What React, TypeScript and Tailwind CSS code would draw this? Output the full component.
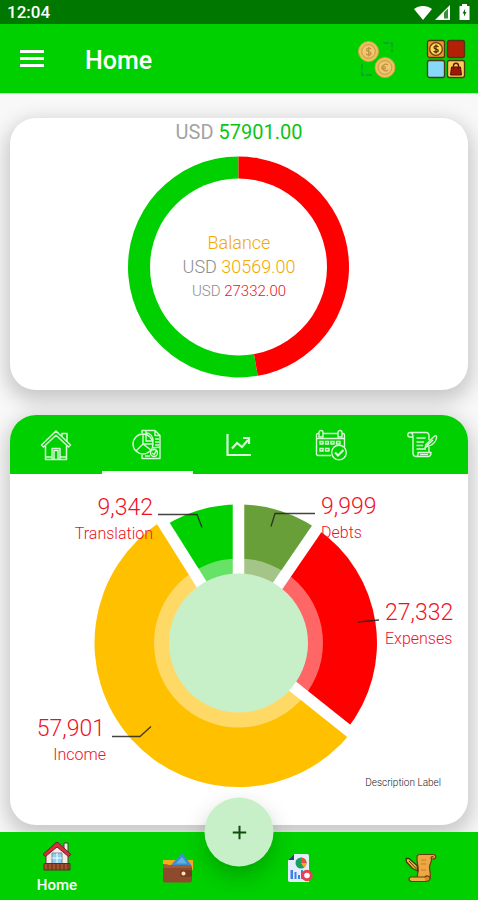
import React from "react";

function point(cx: number, cy: number, r: number, deg: number) {
  const a = ((deg - 90) * Math.PI) / 180;
  return `${(cx + r * Math.cos(a)).toFixed(2)} ${(cy + r * Math.sin(a)).toFixed(2)}`;
}

function wedge(cx: number, cy: number, r: number, from: number, to: number) {
  const large = to - from > 180 ? 1 : 0;
  return `M${cx} ${cy}L${point(cx, cy, r, from)}A${r} ${r} 0 ${large} 1 ${point(cx, cy, r, to)}Z`;
}

function StatusBar() {
  return (
    <div className="flex h-6 items-center justify-between bg-[#007800] pl-[7px] pr-2 text-white">
      <span className="text-[17px] leading-5 font-medium">12:04</span>
      <div className="flex items-center gap-[3px]" aria-hidden="true">
        <svg width="18" height="15" viewBox="0 0 18 15" fill="currentColor">
          <path d="M0 4C5 0 13 0 18 4L9 15Z" />
        </svg>
        <svg width="15" height="15" viewBox="0 0 15 15">
          <path d="M0 15L15 0V15Z" fill="#fff" />
          <path d="M9 7.500L13 3.500V13.500H9Z" fill="#3b8f3b" />
        </svg>
        <svg width="11" height="16" viewBox="0 0 11 16" className="ml-[6px]">
          <path d="M3 0H8V2H10.500V16H.5V2H3Z" fill="#fff" />
          <path d="M6 5L3.500 9.500H5V12.500L7.500 8H6Z" fill="#0b6b0b" />
        </svg>
      </div>
    </div>
  );
}

function CoinsIcon() {
  return (
    <svg width="38" height="38" viewBox="0 0 38 38">
      <path d="M25 3H34V12M4 24V35H15" fill="none" stroke="#0f9a35" strokeWidth="1.300" strokeDasharray="6 1.500" />
      <circle cx="10.500" cy="11.500" r="10" fill="#eec062" stroke="#d3a548" strokeWidth="1" />
      <circle cx="10.500" cy="11.500" r="6.800" fill="#f0c870" stroke="#d2a04a" strokeWidth="1.200" />
      <path d="M13 9.300C12.300 7.600 8.500 7.600 8.500 9.700C8.500 12 13 11 13 13.500C13 15.700 8.800 15.500 8 13.700M10.700 7V16.500" fill="none" stroke="#c39240" strokeWidth="1.300" />
      <circle cx="27" cy="27.500" r="10" fill="#eec062" stroke="#d3a548" strokeWidth="1" />
      <circle cx="27" cy="27.500" r="6.800" fill="#f0c870" stroke="#d2a04a" strokeWidth="1.200" />
      <path d="M30 25C28 23 24.500 24.500 24.500 27.500C24.500 30.500 28 32 30 30M23 26.800H28M23 28.600H28" fill="none" stroke="#c39240" strokeWidth="1.200" />
    </svg>
  );
}

function CategoriesIcon() {
  return (
    <svg width="40" height="40" viewBox="0 0 40 40">
      <g stroke="#4a3a10" strokeWidth="1.300">
        <rect x="1.500" y="1.500" width="17" height="17" rx="2" fill="#f29527" />
        <rect x="21.500" y="1.500" width="17" height="17" rx="2" fill="#b42106" />
        <rect x="1.500" y="21.500" width="17" height="17" rx="2" fill="#86d9fb" />
        <rect x="21.500" y="21.500" width="17" height="17" rx="2" fill="#fccb55" />
      </g>
      <circle cx="10" cy="10" r="6.300" fill="#ffd95a" stroke="#6e3d0c" strokeWidth="1.300" />
      <path d="M12.300 8C11.600 6.500 8 6.600 8 8.500C8 10.800 12.300 9.500 12.300 11.700C12.300 13.700 8.300 13.500 7.700 12M10 5.500V14.500" fill="none" stroke="#5a2f08" strokeWidth="1.300" />
      <path d="M25.500 28H34.500L35.500 36H24.500Z" fill="#a41508" stroke="#4a1508" strokeWidth="1" />
      <path d="M27.500 30V26.500C27.500 23.500 32.500 23.500 32.500 26.500V30" fill="none" stroke="#6b1508" strokeWidth="1.400" />
    </svg>
  );
}

function Header() {
  return (
    <header className="flex h-[69px] items-center bg-[#00d000] px-3 text-white shadow-[0_1px_1px_rgba(0,0,0,0.12)]">
      <button type="button" aria-label="Open menu" className="flex w-10 justify-center">
        <svg width="24" height="18" viewBox="0 0 24 18" fill="currentColor">
          <path d="M0 0H24V3H0ZM0 7H24V10H0ZM0 14H24V17H0Z" />
        </svg>
      </button>
      <h1 className="ml-[33px] flex-1 pt-1 text-[25px] leading-8 font-medium">Home</h1>
      <button type="button" aria-label="Currencies" className="mr-[30px]">
        <CoinsIcon />
      </button>
      <button type="button" aria-label="Categories">
        <CategoriesIcon />
      </button>
    </header>
  );
}

const card = "overflow-hidden rounded-[26px] bg-white shadow-[0_7px_20px_4px_rgba(0,0,0,0.2)]";

function BalanceCard() {
  const red = (27332 / 57901) * 360;
  return (
    <section className={`${card} flex h-[272px] flex-col items-center`}>
      <p className="text-[20px] leading-7 text-[#a3a3a3]">
        USD <span className="text-[#0cc416]">57901.00</span>
      </p>
      <div className="mt-[10px] grid place-items-center">
        <svg width="222" height="222" viewBox="0 0 222 222" className="col-start-1 row-start-1" aria-hidden="true">
          <path d={wedge(110.5, 111, 110.5, red, 360)} fill="#00d000" />
          <path d={wedge(110.5, 111, 110.5, 0, red)} fill="#ff0000" />
          <circle cx="110.500" cy="111" r="88.500" fill="#fff" />
        </svg>
        <div className="col-start-1 row-start-1 text-center text-[#8c8c8c] font-light">
          <p className="text-[18px] leading-6 text-[#f5a800]">Balance</p>
          <p className="text-[18px] leading-6">
            USD <span className="text-[#f5a800]">30569.00</span>
          </p>
          <p className="text-[15px] leading-6">
            USD <span className="text-[#f0101f]">27332.00</span>
          </p>
        </div>
      </div>
    </section>
  );
}

function HouseTab() {
  return (
    <svg width="32" height="32" viewBox="0 0 32 32" fill="none" stroke="currentColor" strokeWidth="1.500" strokeLinejoin="round">
      <path d="M1.500 16L16 2L30.500 16L28.500 18L16 6.200L3.500 18Z" />
      <path d="M5.500 17V30.500H26.500V17M22 7.500V4.500H27V12.500M12 30V19.500H20V30M14 30V21.500H18V30M5.500 28H12M20 28H26.500" />
    </svg>
  );
}

function ReportTab() {
  return (
    <svg width="30" height="31" viewBox="0 0 30 31" fill="none" stroke="currentColor" strokeWidth="1.400" strokeLinejoin="round">
      <path d="M10 4V1.500H23L28 6.500V29.500H10V26M23 1.500V6.500H28" />
      <circle cx="11" cy="15" r="10" />
      <path d="M11 5V15L4 22M11 15L19 21M11 15H21M14 2V12H21C21 7 18 4 14 4" />
      <circle cx="22" cy="24" r="3.500" />
      <path d="M20 24L22 25.500L25 21M23 10H27M23 13H27M23 16H27M21 19L28 18M13 27H18" />
    </svg>
  );
}

function TrendTab() {
  return (
    <svg width="26" height="24" viewBox="0 0 26 24" fill="none" stroke="currentColor" strokeWidth="2.200">
      <path d="M1.500 1V22H25" />
      <path d="M6 15.500L11 10L16 14L22 7M17 5H23V11" />
    </svg>
  );
}

function CalendarTab() {
  return (
    <svg width="32" height="32" viewBox="0 0 32 32" fill="none" stroke="currentColor" strokeWidth="1.400">
      <path d="M16 26.500H3C2 26.500 1.500 26 1.500 25V6C1.500 5 2 4.500 3 4.500H4M8 4.500H23M27 4.500H28C29 4.500 29.500 5 29.500 6V18M1.500 9.500H29.500" />
      <path d="M4 8V3.500C4 .8 8 .8 8 3.500V8ZM23 8V3.500C23 .8 27 .8 27 3.500V8Z" />
      <path d="M5 12.500H8V15H5ZM10.500 12.500H13.500V15H10.500ZM16 12.500H19V15H16ZM21.500 12.500H25V15H21.500ZM5 19.500H8V22H5ZM10.500 19.500H14V22H10.500Z" />
      <circle cx="24" cy="23.500" r="7.300" />
      <path d="M20 23.500L23 26.500L28.500 21" strokeWidth="2.200" />
    </svg>
  );
}

function ScrollTab() {
  return (
    <svg width="32" height="27" viewBox="0 0 32 27" fill="none" stroke="currentColor" strokeWidth="1.400" strokeLinejoin="round">
      <path d="M4 6C1 6 1 1.500 4 1.500H20C22.500 1.500 23 3.500 23 5V9M4 1.500C6.500 1.500 7 3.500 7 6V22C7 26.500 12 26.500 12 23V21.500H25C25 24 24 25.500 22 25.500H10M4 6H7M23 16V21.500" />
      <path d="M10.500 7H19.500M10.500 11H18M10.500 14.500H17M10.500 18H20M14 23.500H22" />
      <path d="M19 17L20 13.500L28 5.500C30 4 31 5 30.500 7C30 11 26 15 21 15.500ZM21 14.500L27 9" />
    </svg>
  );
}

const tabs = [
  { name: "Overview", icon: <HouseTab /> },
  { name: "Report", icon: <ReportTab /> },
  { name: "Trend", icon: <TrendTab /> },
  { name: "Calendar", icon: <CalendarTab /> },
  { name: "Notes", icon: <ScrollTab /> },
];

const slices = [
  { color: "#689f38", value: 9999, r: 138.5 },
  { color: "#ff0000", value: 27332, r: 138.5 },
  { color: "#ffc000", value: 57901, r: 144 },
  { color: "#00d000", value: 9342, r: 138.5 },
];

function PieChart() {
  const total = slices.reduce((sum, s) => sum + s.value, 0);
  const cx = 228.5;
  const cy = 169;
  let angle = 0;
  const drawn = slices.map((s) => {
    const from = angle;
    angle += (s.value / total) * 360;
    return { ...s, from, to: angle };
  });
  return (
    <svg viewBox="0 0 458 351" className="block w-full" role="img" aria-label="Totals by type">
      {drawn.map((s) => (
        <path key={s.color} d={wedge(cx, cy, s.r, s.from, s.to)} fill={s.color} />
      ))}
      <circle cx={cx} cy={cy} r="84.500" fill="#fff" fillOpacity="0.4" />
      {drawn.map((s) => (
        <path key={s.color} d={`M${cx} ${cy}L${point(cx, cy, 150, s.from)}`} stroke="#fff" strokeWidth="11.500" />
      ))}
      <circle cx={cx} cy={cy} r="69.500" fill="#c8f0c8" />
      <g fill="none" stroke="#222" strokeOpacity="0.85" strokeWidth="1.300">
        <path d="M148 40.500H187L192 53.500" />
        <path d="M305 39.500H265L261 52.500" />
        <path d="M348 148L369 146" />
        <path d="M102 262.500H130L141 252.500" />
      </g>
      <g fill="#f0101f" className="text-[23px] font-light">
        <text x="143" y="41" textAnchor="end">9,342</text>
        <text x="311" y="40">9,999</text>
        <text x="375" y="146">27,332</text>
        <text x="95" y="262" textAnchor="end">57,901</text>
      </g>
      <g fill="#f0101f" className="text-[16px] font-light">
        <text x="143" y="65" textAnchor="end">Translation</text>
        <text x="311" y="64">Debts</text>
        <text x="375" y="170">Expenses</text>
        <text x="96" y="286" textAnchor="end">Income</text>
      </g>
      <text x="431" y="312" textAnchor="end" fill="#222" className="text-[10px] font-light">Description Label</text>
    </svg>
  );
}

function ChartCard() {
  return (
    <section className={card}>
      <div role="tablist" className="grid h-[59px] grid-cols-5 bg-[#00d000] text-[#d6f8d6]">
        {tabs.map((tab, i) => (
          <button
            key={tab.name}
            type="button"
            role="tab"
            aria-label={tab.name}
            aria-selected={i === 1}
            className={
              i === 1
                ? "flex items-center justify-center border-b-[3px] border-white pt-[3px]"
                : "flex items-center justify-center"
            }
          >
            {tab.icon}
          </button>
        ))}
      </div>
      <PieChart />
    </section>
  );
}

function HouseColour() {
  return (
    <svg width="30" height="30" viewBox="0 0 30 30" strokeLinejoin="round">
      <path d="M22 2H26V11H22Z" fill="#eee" stroke="#5b3434" />
      <path d="M4 12L15 3L26 12V26H4Z" fill="#f3ece6" stroke="#5b3434" />
      <path d="M1 13.500L14 1.500H16L29 13.500L26.500 15.500L15 6L3.500 15.500Z" fill="#d92b3d" stroke="#6c2230" />
      <path d="M10 12H20V23H10Z" fill="#8fd0ee" stroke="#7b8792" />
      <path d="M15 12V23M10 17H20" stroke="#fff" />
      <path d="M2 22.500H28V29H2Z" fill="#a6502e" stroke="#5b2c20" />
      <path d="M6 22V29M10 22V29M14 22V29M18 22V29M22 22V29M26 22V29" stroke="#5b2c20" />
    </svg>
  );
}

function WalletColour() {
  return (
    <svg width="32" height="30" viewBox="0 0 32 30">
      <path d="M1 7H31V17H1Z" fill="#f6ab1c" />
      <path d="M8 13L20 0L30 13Z" fill="#3a8fd0" />
      <path d="M14 10.500L20 4L25 10.500Z" fill="#63b2e6" />
      <path d="M1 11L10 12.500H27Q30 12.500 30 15V27Q30 29.500 27.500 29.500H3.500Q1 29.500 1 27Z" fill="#8f4a2d" />
      <path d="M1 11L10 12.500H27L30 15H1Z" fill="#a35b37" />
      <rect x="18" y="17" width="12" height="7" rx="2" fill="#7d3b21" />
      <circle cx="21.500" cy="20.500" r="2" fill="#ffe6b0" />
    </svg>
  );
}

function ReportColour() {
  return (
    <svg width="26" height="30" viewBox="0 0 26 30">
      <path d="M7 1H20Q22 1 22 3V29H3Q1 29 1 27V7Z" fill="#e4eefb" />
      <path d="M7 1V7H1Z" fill="#29456b" />
      <circle cx="14" cy="10" r="5.500" fill="#18a05e" />
      <path d="M14 10V4.500A5.500 5.500 0 0 1 19.500 10Z" fill="#f44c3c" />
      <path d="M14 10H19.500A5.500 5.500 0 0 1 17 14.500Z" fill="#f9a825" />
      <path d="M3.500 17H6V26H3.500ZM7.500 19H9.500V26H7.500ZM11 22H13V26H11ZM14 17H16V26H14Z" fill="#3f7fe8" />
      <circle cx="20" cy="22.500" r="4.300" fill="#fff" stroke="#e83f55" strokeWidth="3" />
    </svg>
  );
}

function ScrollColour() {
  return (
    <svg width="32" height="30" viewBox="0 0 32 30" strokeLinejoin="round">
      <path d="M12 4C12 1 15 1.500 17 1.500H28C32 1.500 31.500 6 28 6H26.500C27 9 24.500 11 24.500 14C24.500 18 26 20 25 25H12C13 20 13.500 15 12.500 11C12 8.500 12 6 12 4Z" fill="#eda845" stroke="#6b3a0c" strokeWidth="1.200" />
      <path d="M26.500 6C25 3.500 28 3 28.500 4.500" fill="none" stroke="#6b3a0c" strokeWidth="1.200" />
      <path d="M6 24H20C23 24 24 28.500 20 28.500H7C3 28.500 3.500 24 6 24Z" fill="#f0ae48" stroke="#6b3a0c" strokeWidth="1.200" />
      <path d="M20 24.500C20.500 22 25.500 22.500 25 26C24.700 28 22.500 28.500 20 28.500" fill="#d98a2a" stroke="#6b3a0c" strokeWidth="1.200" />
      <path d="M1 5.500L4 5.500L12 12.500L13 18L7.500 15.500L1.500 9Z" fill="#e0bf35" stroke="#4d3310" strokeWidth="1.300" />
      <path d="M4 8L12 16.500" stroke="#4d3310" />
      <path d="M16 7H21M16 11H21M16 17H21" stroke="#c57e28" />
    </svg>
  );
}

const navItem = "flex w-20 flex-col items-center justify-center pt-1";

function BottomNav() {
  return (
    <nav className="relative flex h-[68px] justify-between bg-[#00d000] px-[17px]">
      <button type="button" className={navItem} aria-current="page">
        <HouseColour />
        <span className="pt-1 text-[15px] leading-5 font-medium text-white">Home</span>
      </button>
      <button type="button" aria-label="Wallet" className={navItem}>
        <WalletColour />
      </button>
      <button type="button" aria-label="Reports" className={navItem}>
        <ReportColour />
      </button>
      <button type="button" aria-label="Records" className={navItem}>
        <ScrollColour />
      </button>
      <button
        type="button"
        aria-label="Add"
        className="absolute top-0 left-1/2 flex size-[69px] -translate-x-1/2 -translate-y-1/2 items-center justify-center rounded-full bg-[#c8f0c8] text-[#0b4f0b] shadow-[0_10px_22px_rgba(0,40,0,0.25)]"
      >
        <svg width="14" height="14" viewBox="0 0 14 14" stroke="currentColor" strokeWidth="2">
          <path d="M7 0V14M0 7H14" />
        </svg>
      </button>
    </nav>
  );
}

export default function App() {
  return (
    <div className="flex min-h-screen flex-col bg-[#f8f8f8] font-['Roboto','Liberation_Sans',sans-serif]">
      <StatusBar />
      <Header />
      <main className="flex flex-1 flex-col gap-[25px] px-[10px] pt-[25px] pb-[7px]">
        <BalanceCard />
        <ChartCard />
      </main>
      <BottomNav />
    </div>
  );
}
